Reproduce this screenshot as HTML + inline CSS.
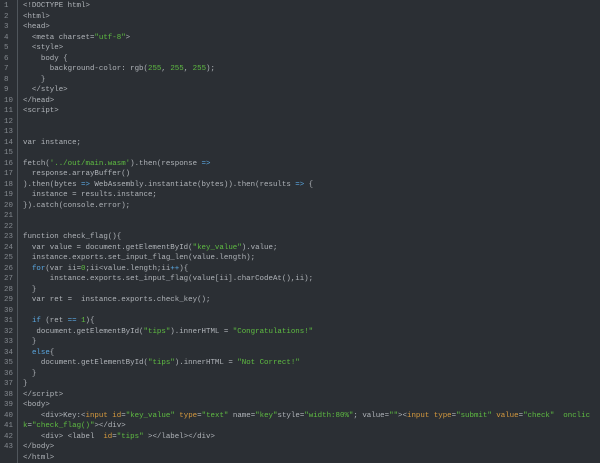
<!DOCTYPE html>
<html><head><meta charset="utf-8"><style>
html,body{margin:0;padding:0;background:#2b2f34;width:600px;height:463px;overflow:hidden}
.wrap{position:relative;font-family:"Liberation Mono",monospace;font-size:7.45px;line-height:10.5px;color:#b0b4b9;white-space:pre}
.g{position:absolute;left:0;top:0;width:17px;border-right:1px solid #50565c;height:463px;color:#858a90}
.g div{padding-left:4px;padding-top:1px}
.c{position:absolute;left:23px;top:1px}
.s{color:#5fbd42}.k{color:#5aa7e0}.o{color:#d69a3e}
</style></head><body><div class="wrap">
<div class="g"><div>1
2
3
4
5
6
7
8
9
10
11
12
13
14
15
16
17
18
19
20
21
22
23
24
25
26
27
28
29
30
31
32
33
34
35
36
37
38
39
40
41
42
43</div></div>
<div class="c">&lt;!DOCTYPE html&gt;
&lt;html&gt;
&lt;head&gt;
  &lt;meta charset=<span class="s">"utf-8"</span>&gt;
  &lt;style&gt;
    body {
      background-color: rgb(<span class="s">255</span>, <span class="s">255</span>, <span class="s">255</span>);
    }
  &lt;/style&gt;
&lt;/head&gt;
&lt;script&gt;


var instance;

fetch(<span class="s">'../out/main.wasm'</span>).then(response <span class="k">=&gt;</span>
  response.arrayBuffer()
).then(bytes <span class="k">=&gt;</span> WebAssembly.instantiate(bytes)).then(results <span class="k">=&gt;</span> {
  instance = results.instance;
}).catch(console.error);


function check_flag(){
  var value = document.getElementById(<span class="s">"key_value"</span>).value;
  instance.exports.set_input_flag_len(value.length);
  <span class="k">for</span>(var ii=<span class="s">0</span>;ii&lt;value.length;ii<span class="k">++</span>){
      instance.exports.set_input_flag(value[ii].charCodeAt(),ii);
  }
  var ret =  instance.exports.check_key();

  <span class="k">if</span> (ret <span class="k">==</span> <span class="s">1</span>){
   document.getElementById(<span class="s">"tips"</span>).innerHTML = <span class="s">"Congratulations!"</span>
  }
  <span class="k">else</span>{
    document.getElementById(<span class="s">"tips"</span>).innerHTML = <span class="s">"Not Correct!"</span>
  }
}
&lt;/script&gt;
&lt;body&gt;
    &lt;div&gt;Key:&lt;<span class="o">input</span> <span class="o">id</span>=<span class="s">"key_value"</span> <span class="o">type</span>=<span class="s">"text"</span> name=<span class="s">"key"</span>style=<span class="s">"width:80%"</span>; value=<span class="s">""</span>&gt;&lt;<span class="o">input</span> <span class="o">type</span>=<span class="s">"submit"</span> <span class="o">value</span>=<span class="s">"check"</span>  <span class="s">onclic</span>
<span class="s">k</span>=<span class="s">"check_flag()"</span>&gt;&lt;/div&gt;
    &lt;div&gt; &lt;label  <span class="o">id</span>=<span class="s">"tips"</span> &gt;&lt;/label&gt;&lt;/div&gt;
&lt;/body&gt;
&lt;/html&gt;</div>
</div></body></html>
